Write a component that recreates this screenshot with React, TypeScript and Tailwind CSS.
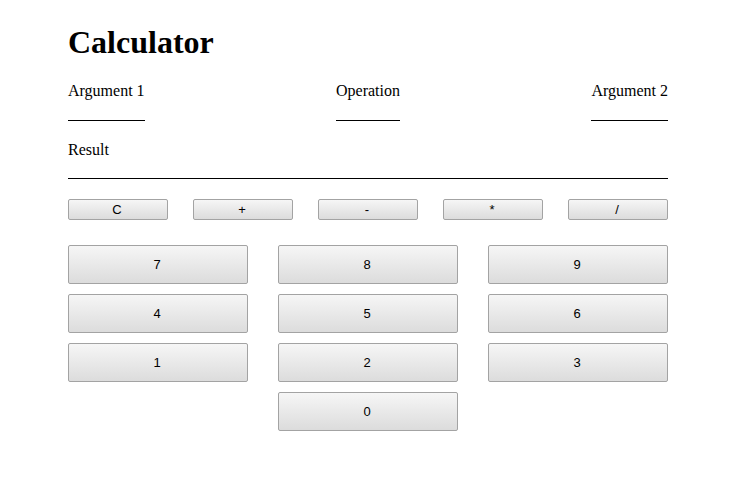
import React from "react";

const opKeys = ["C", "+", "-", "*", "/"];
const numRows = [["7", "8", "9"], ["4", "5", "6"], ["1", "2", "3"]];

const btn =
  "rounded-[2px] border border-[#a3a3a3] bg-gradient-to-b from-[#f6f6f6] to-[#dcdcdc] pr-[2px] text-[13px] text-black [font-family:'Liberation_Sans',Arial,sans-serif]";

function Field({ label }: { label: string }) {
  return (
    <div className="flex flex-col">
      <div className="text-[16px] leading-[18px]">{label}</div>
      <div className="h-[21px] border-b border-black" />
    </div>
  );
}

export default function App() {
  return (
    <div className="w-[743px] h-[490px] bg-white text-black [font-family:'Liberation_Serif','Times_New_Roman',serif]">
      <div className="ml-[68px] w-[600px] pt-[24px]">
        <h1 className="text-[32px] leading-[36px] font-bold">Calculator</h1>

        <div className="mt-[22px] flex justify-between">
          <Field label="Argument 1" />
          <Field label="Operation" />
          <Field label="Argument 2" />
        </div>

        <div className="mt-[20px] flex flex-col">
          <div className="text-[16px] leading-[18px]">Result</div>
          <div className="h-[20px] border-b border-black" />
        </div>

        <div className="mt-[20px] flex justify-between">
          {opKeys.map(k => (
            <button key={k} className={`${btn} w-[100px] h-[21px] leading-none`}>
              {k}
            </button>
          ))}
        </div>

        <div className="mt-[25px] flex flex-col gap-[10px]">
          {numRows.map((row, i) => (
            <div key={i} className="flex justify-between">
              {row.map(n => (
                <button key={n} className={`${btn} w-[180px] h-[39px]`}>
                  {n}
                </button>
              ))}
            </div>
          ))}
          <div className="flex justify-center">
            <button className={`${btn} w-[180px] h-[39px]`}>0</button>
          </div>
        </div>
      </div>
    </div>
  );
}
